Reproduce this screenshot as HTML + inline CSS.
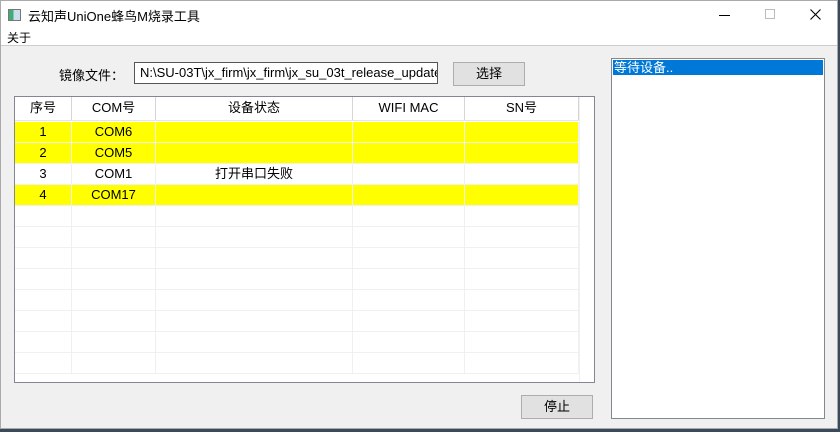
<!DOCTYPE html>
<html><head><meta charset="utf-8"><style>
*{margin:0;padding:0;box-sizing:border-box}
body{width:840px;height:432px;background:#3a4a5a;font-family:"Liberation Sans","Noto Sans CJK SC",sans-serif;font-size:13px;color:#000;position:relative;overflow:hidden}
.win{position:absolute;left:0;top:0;width:838px;height:429px;background:#f0f0f0;border:1px solid #aaa}
.abs{position:absolute}
.title{left:0;top:0;width:836px;height:28px;background:#fff}
.menu{left:0;top:28px;width:836px;height:17px;background:#fff;border-bottom:1px solid #ccc}
.tbl{left:13px;top:95px;width:581px;height:287px;border:1px solid #828790;background:#fff;overflow:hidden}
.row{position:absolute;left:0;height:21px;width:564px;border-bottom:1px solid #f0f0f0}
.c{position:absolute;top:0;height:100%;text-align:center;line-height:20px;border-right:1px solid #f0f0f0}
.hd .c{border-right:1px solid #d5d5d5;line-height:22px;color:#000}
.btn{background:#e1e1e1;border:1px solid #adadad;text-align:center}
</style></head><body>
<div class="win">
<div class="abs title">
 <div class="abs" style="left:7px;top:8px;width:13px;height:12px;border:1px solid #777;background:linear-gradient(90deg,#4a7 0 40%,#cde 40%)"></div>
 <div class="abs" style="left:27px;top:5px;font-size:13px">云知声UniOne蜂鸟M烧录工具</div>
 <div class="abs" style="left:718px;top:14px;width:11px;height:1px;background:#000"></div>
 <div class="abs" style="left:764px;top:8px;width:10px;height:10px;border:1px solid #bbb"></div>
 <svg class="abs" style="left:809px;top:8px" width="11" height="11"><path d="M0.5 0.5L10.5 10.5M10.5 0.5L0.5 10.5" stroke="#000" stroke-width="1.1"/></svg>
</div>
<div class="abs menu"><span class="abs" style="left:6px;top:0px;font-size:12px">关于</span></div>
<div class="abs" style="left:58px;top:64px">镜像文件：</div>
<div class="abs" style="left:133px;top:61px;width:304px;height:22px;background:#fff;border:1px solid #555;padding-left:5px;line-height:20px;white-space:nowrap;overflow:hidden">N:\SU-03T\jx_firm\jx_firm\jx_su_03t_release_update.bin</div>
<div class="abs btn" style="left:452px;top:61px;width:72px;height:24px;line-height:22px">选择</div>
<div class="abs tbl">
 <div class="row hd" style="top:0;height:24px;background:#fff;border-bottom:1px solid #e5e5e5">
  <div class="c" style="left:0;width:57px">序号</div><div class="c" style="left:57px;width:84px">COM号</div><div class="c" style="left:141px;width:197px">设备状态</div><div class="c" style="left:338px;width:112px">WIFI MAC</div><div class="c" style="left:450px;width:114px">SN号</div>
 </div>
 <div style="position:absolute;left:564px;top:0;width:1px;height:287px;background:#f0f0f0"></div>
 <div class="row" style="top:25px;background:#ff0"><div class="c" style="left:0;width:57px">1</div><div class="c" style="left:57px;width:84px">COM6</div><div class="c" style="left:141px;width:197px"></div><div class="c" style="left:338px;width:112px"></div><div class="c" style="left:450px;width:114px"></div></div>
 <div class="row" style="top:46px;background:#ff0"><div class="c" style="left:0;width:57px">2</div><div class="c" style="left:57px;width:84px">COM5</div><div class="c" style="left:141px;width:197px"></div><div class="c" style="left:338px;width:112px"></div><div class="c" style="left:450px;width:114px"></div></div>
 <div class="row" style="top:67px"><div class="c" style="left:0;width:57px">3</div><div class="c" style="left:57px;width:84px">COM1</div><div class="c" style="left:141px;width:197px">打开串口失败</div><div class="c" style="left:338px;width:112px"></div><div class="c" style="left:450px;width:114px"></div></div>
 <div class="row" style="top:88px;background:#ff0"><div class="c" style="left:0;width:57px">4</div><div class="c" style="left:57px;width:84px">COM17</div><div class="c" style="left:141px;width:197px"></div><div class="c" style="left:338px;width:112px"></div><div class="c" style="left:450px;width:114px"></div></div>
 <div class="row" style="top:109px"><div class="c" style="left:0;width:57px"></div><div class="c" style="left:57px;width:84px"></div><div class="c" style="left:141px;width:197px"></div><div class="c" style="left:338px;width:112px"></div><div class="c" style="left:450px;width:114px"></div></div>
 <div class="row" style="top:130px"><div class="c" style="left:0;width:57px"></div><div class="c" style="left:57px;width:84px"></div><div class="c" style="left:141px;width:197px"></div><div class="c" style="left:338px;width:112px"></div><div class="c" style="left:450px;width:114px"></div></div>
 <div class="row" style="top:151px"><div class="c" style="left:0;width:57px"></div><div class="c" style="left:57px;width:84px"></div><div class="c" style="left:141px;width:197px"></div><div class="c" style="left:338px;width:112px"></div><div class="c" style="left:450px;width:114px"></div></div>
 <div class="row" style="top:172px"><div class="c" style="left:0;width:57px"></div><div class="c" style="left:57px;width:84px"></div><div class="c" style="left:141px;width:197px"></div><div class="c" style="left:338px;width:112px"></div><div class="c" style="left:450px;width:114px"></div></div>
 <div class="row" style="top:193px"><div class="c" style="left:0;width:57px"></div><div class="c" style="left:57px;width:84px"></div><div class="c" style="left:141px;width:197px"></div><div class="c" style="left:338px;width:112px"></div><div class="c" style="left:450px;width:114px"></div></div>
 <div class="row" style="top:214px"><div class="c" style="left:0;width:57px"></div><div class="c" style="left:57px;width:84px"></div><div class="c" style="left:141px;width:197px"></div><div class="c" style="left:338px;width:112px"></div><div class="c" style="left:450px;width:114px"></div></div>
 <div class="row" style="top:235px"><div class="c" style="left:0;width:57px"></div><div class="c" style="left:57px;width:84px"></div><div class="c" style="left:141px;width:197px"></div><div class="c" style="left:338px;width:112px"></div><div class="c" style="left:450px;width:114px"></div></div>
 <div class="row" style="top:256px"><div class="c" style="left:0;width:57px"></div><div class="c" style="left:57px;width:84px"></div><div class="c" style="left:141px;width:197px"></div><div class="c" style="left:338px;width:112px"></div><div class="c" style="left:450px;width:114px"></div></div>
</div>
<div class="abs btn" style="left:520px;top:394px;width:72px;height:24px;line-height:22px">停止</div>
<div class="abs" style="left:610px;top:57px;width:214px;height:361px;background:#fff;border:1px solid #828790">
 <div style="margin:1px;height:15px;background:#0078d7;color:#fff;line-height:15px;padding-left:1px">等待设备..</div>
</div>
</div>
</body></html>
